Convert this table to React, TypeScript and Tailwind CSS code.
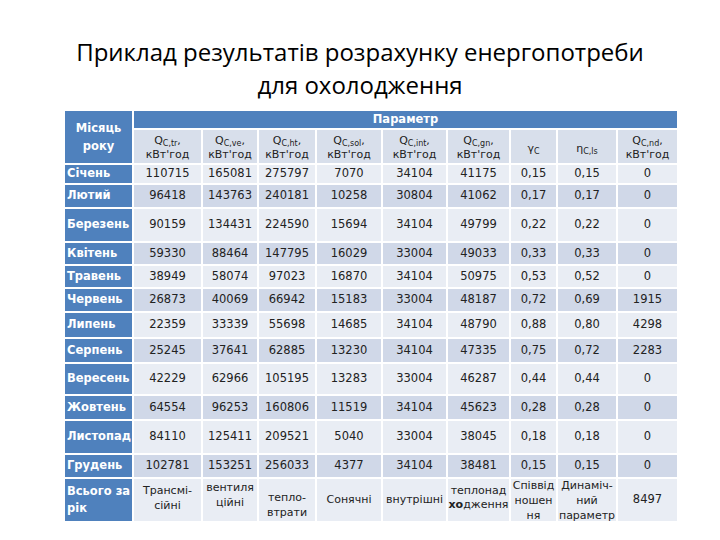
import React from "react";

const rows: string[][] = [
  ["Січень", "110715", "165081", "275797", "7070", "34104", "41175", "0,15", "0,15", "0"],
  ["Лютий", "96418", "143763", "240181", "10258", "30804", "41062", "0,17", "0,17", "0"],
  ["Березень", "90159", "134431", "224590", "15694", "34104", "49799", "0,22", "0,22", "0"],
  ["Квітень", "59330", "88464", "147795", "16029", "33004", "49033", "0,33", "0,33", "0"],
  ["Травень", "38949", "58074", "97023", "16870", "34104", "50975", "0,53", "0,52", "0"],
  ["Червень", "26873", "40069", "66942", "15183", "33004", "48187", "0,72", "0,69", "1915"],
  ["Липень", "22359", "33339", "55698", "14685", "34104", "48790", "0,88", "0,80", "4298"],
  ["Серпень", "25245", "37641", "62885", "13230", "34104", "47335", "0,75", "0,72", "2283"],
  ["Вересень", "42229", "62966", "105195", "13283", "33004", "46287", "0,44", "0,44", "0"],
  ["Жовтень", "64554", "96253", "160806", "11519", "34104", "45623", "0,28", "0,28", "0"],
  ["Листопад", "84110", "125411", "209521", "5040", "33004", "38045", "0,18", "0,18", "0"],
  ["Грудень", "102781", "153251", "256033", "4377", "34104", "38481", "0,15", "0,15", "0"],
];

function QHead({ sub }: { sub: string }) {
  return (
    <div className="flex h-full flex-col items-center justify-center pt-[3px] leading-[14px]">
      <div>
        Q<sub className="text-[8px] leading-none">{sub}</sub>,
      </div>
      <div>кВт'год</div>
    </div>
  );
}

export default function App() {
  const hdr = "bg-[#d8dfeb] text-[11px] text-[#222]";
  return (
    <div className="h-[540px] w-[720px] bg-white font-['DejaVu_Sans',sans-serif]">
      <div className="pt-[35px] text-center font-['Open_Sans',sans-serif] text-[24px] leading-[33px] text-black">
        <div>Приклад результатів розрахунку енергопотреби</div>
        <div>для охолодження</div>
      </div>
      <div className="ml-[65px] mt-[10px] grid w-[612px] grid-cols-[67px_67px_54px_56px_64px_63px_61px_45px_58px_59px] grid-rows-[17px_33px_18px_22px_32px_21px_21px_22px_24px_23px_30px_23px_32px_22px_42px] gap-[2px] bg-white">
        <div className="row-span-2 flex flex-col items-center justify-center bg-[#4f81bd] text-[11.5px] font-bold leading-[18px] text-white">
          <div>Місяць</div>
          <div>року</div>
        </div>
        <div className="col-span-9 flex items-center justify-center bg-[#4f81bd] text-[11.5px] font-bold text-white">
          Параметр
        </div>
        <div className={hdr}><QHead sub="C,tr" /></div>
        <div className={hdr}><QHead sub="C,ve" /></div>
        <div className={hdr}><QHead sub="C,ht" /></div>
        <div className={hdr}><QHead sub="C,sol" /></div>
        <div className={hdr}><QHead sub="C,int" /></div>
        <div className={hdr}><QHead sub="C,gn" /></div>
        <div className={`${hdr} flex items-center justify-center pt-[6px]`}>
          <span>
            γ<sub className="text-[8px] leading-none">C</sub>
          </span>
        </div>
        <div className={`${hdr} flex items-center justify-center pt-[6px]`}>
          <span>
            η<sub className="text-[8px] leading-none">C,ls</sub>
          </span>
        </div>
        <div className={hdr}><QHead sub="C,nd" /></div>

        {rows.map((r, i) => {
          const bg = i % 2 === 0 ? "bg-[#e9edf4]" : "bg-[#d0d8e8]";
          return (
            <React.Fragment key={r[0]}>
              <div className="flex items-center bg-[#4f81bd] pl-[2px] text-[11.5px] font-bold text-white">
                {r[0]}
              </div>
              {r.slice(1).map((v, j) => (
                <div
                  key={j}
                  className={`${bg} flex items-center justify-center text-[11.5px] text-[#222]`}
                >
                  {v}
                </div>
              ))}
            </React.Fragment>
          );
        })}

        <div className="flex flex-col justify-center bg-[#4f81bd] pl-[2px] text-[11.5px] font-bold leading-[17px] text-white">
          <div>Всього за</div>
          <div>рік</div>
        </div>
        <div className="flex flex-col items-center justify-center bg-[#e9edf4] pb-[4px] text-[11px] leading-[15px] text-[#222]">
          <div>Трансмі-</div>
          <div>сійні</div>
        </div>
        <div className="flex flex-col items-center justify-center bg-[#e9edf4] pb-[10px] text-[11px] leading-[15px] text-[#222]">
          <div>вентиля</div>
          <div>ційні</div>
        </div>
        <div className="flex flex-col items-center justify-center bg-[#e9edf4] pt-[10px] text-[11px] leading-[15px] text-[#222]">
          <div>тепло-</div>
          <div>втрати</div>
        </div>
        <div className="flex items-center justify-center bg-[#e9edf4] text-[11px] text-[#222]">
          Сонячні
        </div>
        <div className="flex items-center justify-center bg-[#e9edf4] text-[11px] text-[#222]">
          внутрішні
        </div>
        <div className="flex flex-col items-center justify-center bg-[#e9edf4] pb-[4px] text-[11px] leading-[14px] text-[#222]">
          <div>теплонад</div>
          <div>
            <b>хо</b>дження
          </div>
        </div>
        <div className="flex flex-col items-center justify-center bg-[#e9edf4] text-[11px] leading-[15px] text-[#222]">
          <div>Співвід</div>
          <div>ношен</div>
          <div>ня</div>
        </div>
        <div className="flex flex-col items-center justify-center bg-[#e9edf4] text-[11px] leading-[15px] text-[#222]">
          <div>Динаміч-</div>
          <div>ний</div>
          <div>параметр</div>
        </div>
        <div className="flex items-center justify-center bg-[#e9edf4] text-[11.5px] text-[#222]">
          8497
        </div>
      </div>
    </div>
  );
}
